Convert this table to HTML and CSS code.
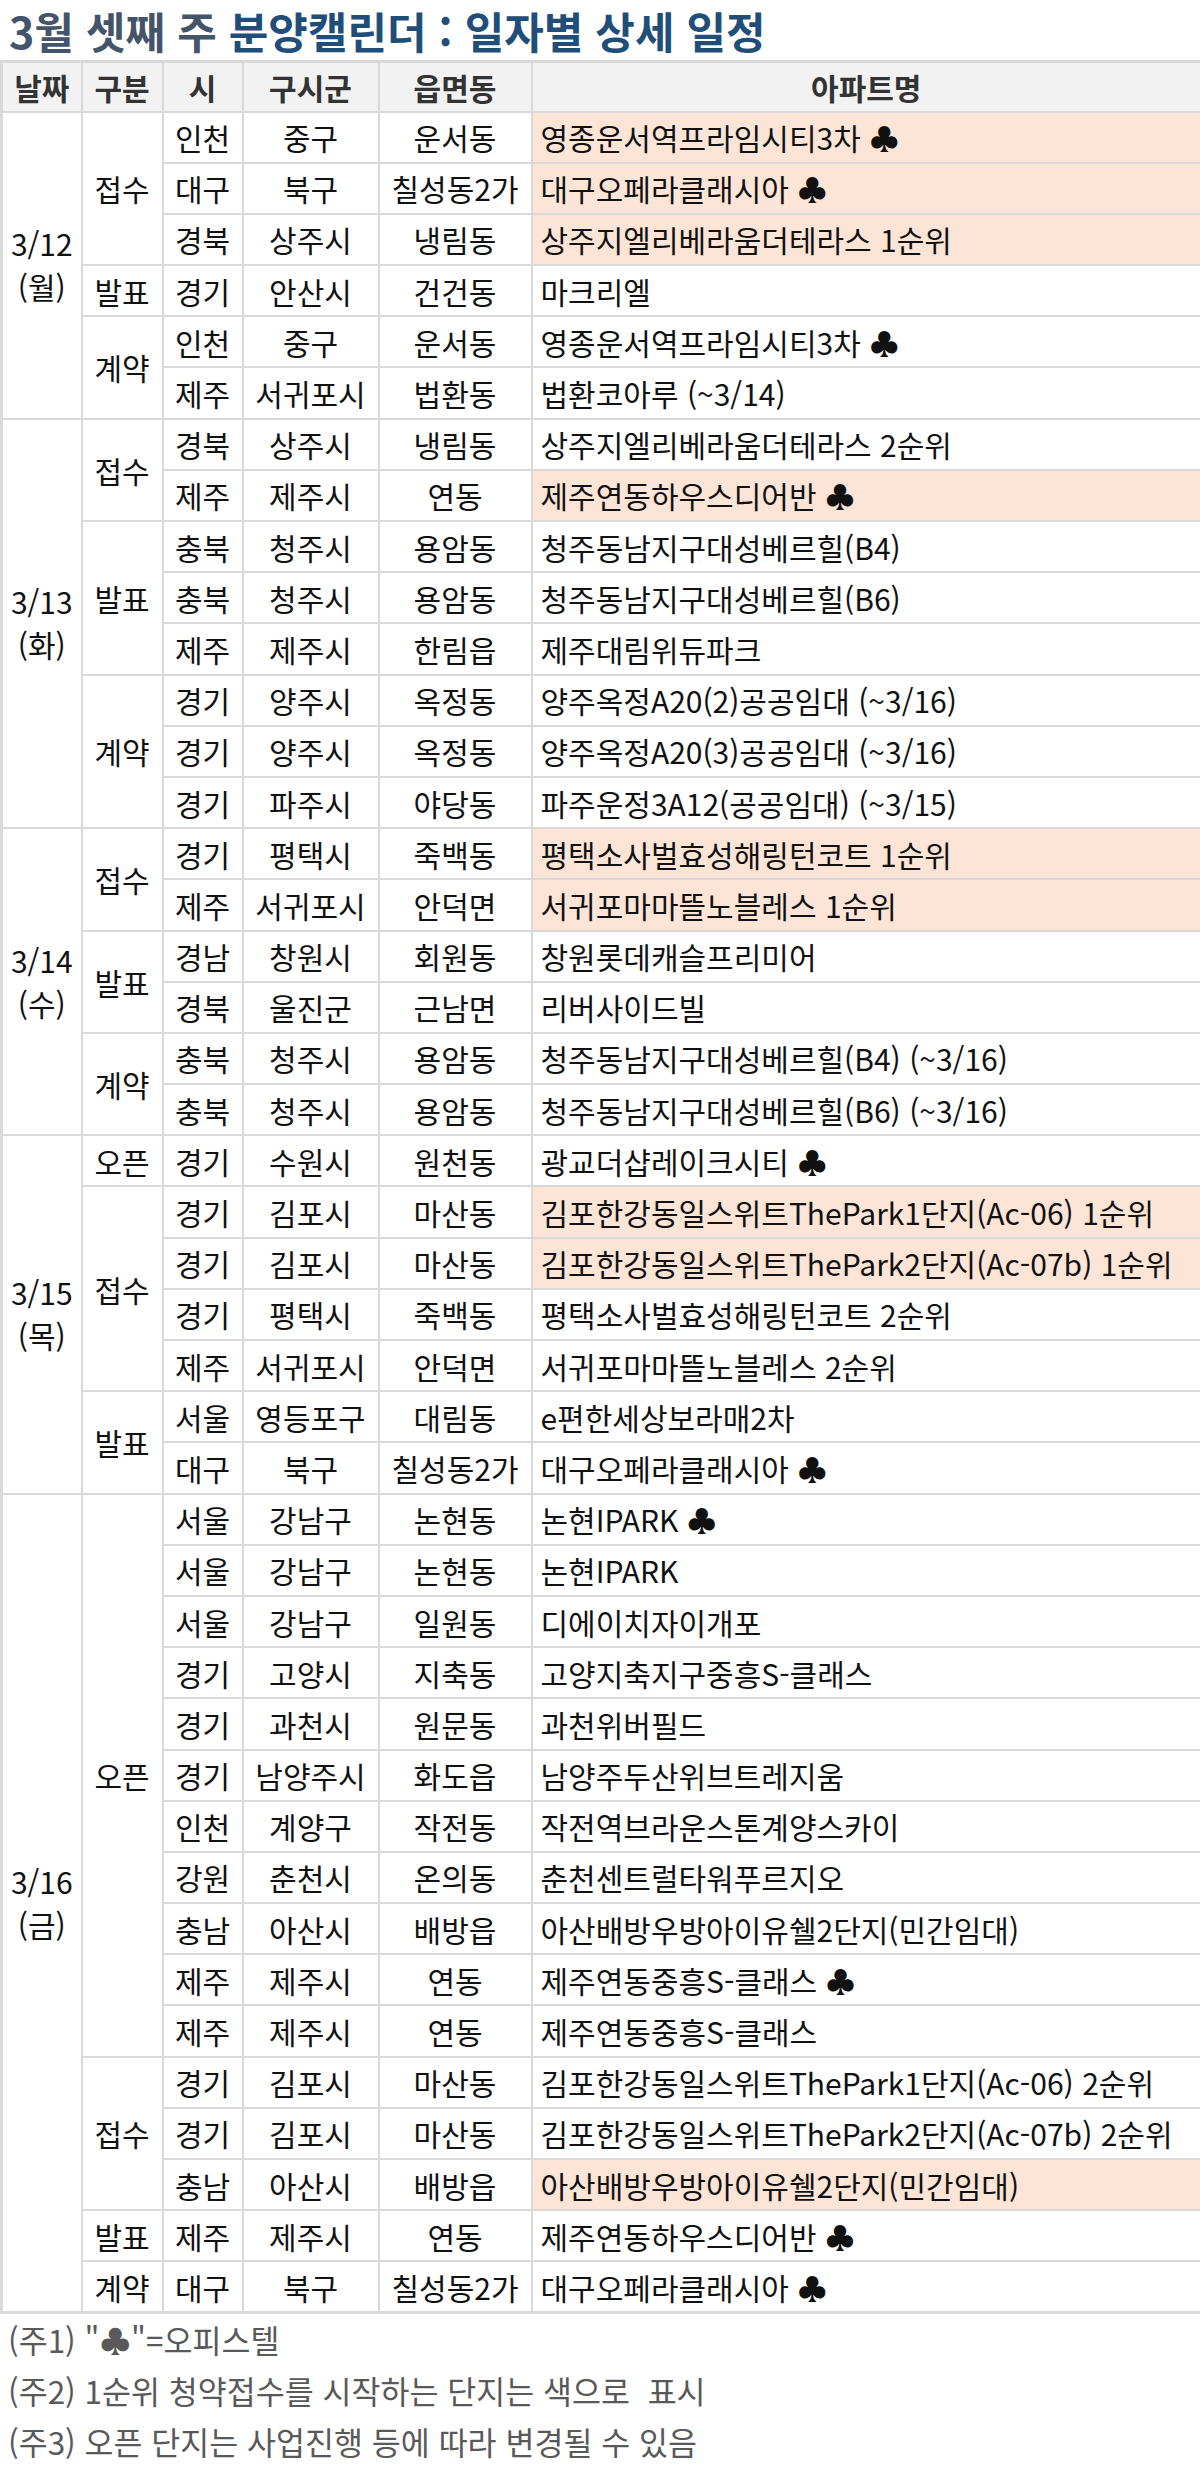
FILE: index.html
```html
<!DOCTYPE html>
<html lang="ko">
<head>
<meta charset="utf-8">
<title>3월 셋째 주 분양캘린더</title>
<link rel="stylesheet" href="styles.css">
</head>
<body>
<h1 class="title"><span class="title-week">3월 셋째 주</span> <span class="title-main">분양캘린더 : 일자별 상세 일정</span></h1>
<table class="cal">
<colgroup>
<col class="c-date"><col class="c-type"><col class="c-si"><col class="c-gu"><col class="c-dong"><col class="c-apt">
</colgroup>
<thead>
<tr><th>날짜</th><th>구분</th><th>시</th><th>구시군</th><th>읍면동</th><th>아파트명</th></tr>
</thead>
<tbody>
<tr><td rowspan="6" class="date">3/12<br>(월)</td><td rowspan="3">접수</td><td>인천</td><td>중구</td><td>운서동</td><td class="apt hl">영종운서역프라임시티3차 ♣</td></tr>
<tr><td>대구</td><td>북구</td><td>칠성동2가</td><td class="apt hl">대구오페라클래시아 ♣</td></tr>
<tr><td>경북</td><td>상주시</td><td>냉림동</td><td class="apt hl">상주지엘리베라움더테라스 1순위</td></tr>
<tr><td>발표</td><td>경기</td><td>안산시</td><td>건건동</td><td class="apt">마크리엘</td></tr>
<tr><td rowspan="2">계약</td><td>인천</td><td>중구</td><td>운서동</td><td class="apt">영종운서역프라임시티3차 ♣</td></tr>
<tr><td>제주</td><td>서귀포시</td><td>법환동</td><td class="apt">법환코아루 (~3/14)</td></tr>

<tr><td rowspan="8" class="date">3/13<br>(화)</td><td rowspan="2">접수</td><td>경북</td><td>상주시</td><td>냉림동</td><td class="apt">상주지엘리베라움더테라스 2순위</td></tr>
<tr><td>제주</td><td>제주시</td><td>연동</td><td class="apt hl">제주연동하우스디어반 ♣</td></tr>
<tr><td rowspan="3">발표</td><td>충북</td><td>청주시</td><td>용암동</td><td class="apt">청주동남지구대성베르힐(B4)</td></tr>
<tr><td>충북</td><td>청주시</td><td>용암동</td><td class="apt">청주동남지구대성베르힐(B6)</td></tr>
<tr><td>제주</td><td>제주시</td><td>한림읍</td><td class="apt">제주대림위듀파크</td></tr>
<tr><td rowspan="3">계약</td><td>경기</td><td>양주시</td><td>옥정동</td><td class="apt">양주옥정A20(2)공공임대 (~3/16)</td></tr>
<tr><td>경기</td><td>양주시</td><td>옥정동</td><td class="apt">양주옥정A20(3)공공임대 (~3/16)</td></tr>
<tr><td>경기</td><td>파주시</td><td>야당동</td><td class="apt">파주운정3A12(공공임대) (~3/15)</td></tr>

<tr><td rowspan="6" class="date">3/14<br>(수)</td><td rowspan="2">접수</td><td>경기</td><td>평택시</td><td>죽백동</td><td class="apt hl">평택소사벌효성해링턴코트 1순위</td></tr>
<tr><td>제주</td><td>서귀포시</td><td>안덕면</td><td class="apt hl">서귀포마마뜰노블레스 1순위</td></tr>
<tr><td rowspan="2">발표</td><td>경남</td><td>창원시</td><td>회원동</td><td class="apt">창원롯데캐슬프리미어</td></tr>
<tr><td>경북</td><td>울진군</td><td>근남면</td><td class="apt">리버사이드빌</td></tr>
<tr><td rowspan="2">계약</td><td>충북</td><td>청주시</td><td>용암동</td><td class="apt">청주동남지구대성베르힐(B4) (~3/16)</td></tr>
<tr><td>충북</td><td>청주시</td><td>용암동</td><td class="apt">청주동남지구대성베르힐(B6) (~3/16)</td></tr>

<tr><td rowspan="7" class="date">3/15<br>(목)</td><td>오픈</td><td>경기</td><td>수원시</td><td>원천동</td><td class="apt">광교더샵레이크시티 ♣</td></tr>
<tr><td rowspan="4">접수</td><td>경기</td><td>김포시</td><td>마산동</td><td class="apt hl">김포한강동일스위트ThePark1단지(Ac-06) 1순위</td></tr>
<tr><td>경기</td><td>김포시</td><td>마산동</td><td class="apt hl">김포한강동일스위트ThePark2단지(Ac-07b) 1순위</td></tr>
<tr><td>경기</td><td>평택시</td><td>죽백동</td><td class="apt">평택소사벌효성해링턴코트 2순위</td></tr>
<tr><td>제주</td><td>서귀포시</td><td>안덕면</td><td class="apt">서귀포마마뜰노블레스 2순위</td></tr>
<tr><td rowspan="2">발표</td><td>서울</td><td>영등포구</td><td>대림동</td><td class="apt">e편한세상보라매2차</td></tr>
<tr><td>대구</td><td>북구</td><td>칠성동2가</td><td class="apt">대구오페라클래시아 ♣</td></tr>

<tr><td rowspan="16" class="date">3/16<br>(금)</td><td rowspan="11">오픈</td><td>서울</td><td>강남구</td><td>논현동</td><td class="apt">논현IPARK ♣</td></tr>
<tr><td>서울</td><td>강남구</td><td>논현동</td><td class="apt">논현IPARK</td></tr>
<tr><td>서울</td><td>강남구</td><td>일원동</td><td class="apt">디에이치자이개포</td></tr>
<tr><td>경기</td><td>고양시</td><td>지축동</td><td class="apt">고양지축지구중흥S-클래스</td></tr>
<tr><td>경기</td><td>과천시</td><td>원문동</td><td class="apt">과천위버필드</td></tr>
<tr><td>경기</td><td>남양주시</td><td>화도읍</td><td class="apt">남양주두산위브트레지움</td></tr>
<tr><td>인천</td><td>계양구</td><td>작전동</td><td class="apt">작전역브라운스톤계양스카이</td></tr>
<tr><td>강원</td><td>춘천시</td><td>온의동</td><td class="apt">춘천센트럴타워푸르지오</td></tr>
<tr><td>충남</td><td>아산시</td><td>배방읍</td><td class="apt">아산배방우방아이유쉘2단지(민간임대)</td></tr>
<tr><td>제주</td><td>제주시</td><td>연동</td><td class="apt">제주연동중흥S-클래스 ♣</td></tr>
<tr><td>제주</td><td>제주시</td><td>연동</td><td class="apt">제주연동중흥S-클래스</td></tr>
<tr><td rowspan="3">접수</td><td>경기</td><td>김포시</td><td>마산동</td><td class="apt">김포한강동일스위트ThePark1단지(Ac-06) 2순위</td></tr>
<tr><td>경기</td><td>김포시</td><td>마산동</td><td class="apt">김포한강동일스위트ThePark2단지(Ac-07b) 2순위</td></tr>
<tr><td>충남</td><td>아산시</td><td>배방읍</td><td class="apt hl">아산배방우방아이유쉘2단지(민간임대)</td></tr>
<tr><td>발표</td><td>제주</td><td>제주시</td><td>연동</td><td class="apt">제주연동하우스디어반 ♣</td></tr>
<tr><td>계약</td><td>대구</td><td>북구</td><td>칠성동2가</td><td class="apt">대구오페라클래시아 ♣</td></tr>
</tbody>
</table>
<div class="notes">
<p class="note">(주1) "♣"=오피스텔</p>
<p class="note">(주2) 1순위 청약접수를 시작하는 단지는 색으로&nbsp; 표시</p>
<p class="note">(주3) 오픈 단지는 사업진행 등에 따라 변경될 수 있음</p>
</div>
</body>
</html>
```

FILE: styles.css
```css
html, body {
  margin: 0;
  padding: 0;
  background: #ffffff;
}
body {
  font-family: "Noto Sans CJK KR", "Noto Sans", sans-serif;
  color: #111111;
}
.title {
  margin: 0;
  padding: 0 0 0 9px;
  height: 60px;
  line-height: 60px;
  font-size: 43px;
  font-weight: 700;
  white-space: nowrap;
}
.title-week {
  color: #44546a;
}
.title-main {
  color: #1f4e79;
}
.cal {
  width: 1200px;
  border-collapse: collapse;
  table-layout: fixed;
  border: 3px solid #d9d9d9;
  font-size: 30px;
}
.c-date { width: 80px; }
.c-type { width: 81px; }
.c-si { width: 80px; }
.c-gu { width: 136px; }
.c-dong { width: 153px; }
.c-apt { width: 670px; }
.cal th,
.cal td {
  border: 2px solid #d9d9d9;
  padding: 0;
  text-align: center;
  vertical-align: middle;
  white-space: nowrap;
  line-height: 1.4;
}
.cal tr {
  height: 51.2px;
}
.cal thead tr {
  height: 50px;
}
.cal th {
  background: #f2f2f2;
  color: #333333;
  font-weight: 700;
}
.cal td.date {
  line-height: 43px;
}
.cal td.apt {
  text-align: left;
  padding-left: 8px;
}
.cal td.hl {
  background: #fce4d6;
}
.notes {
  padding-left: 8px;
}
.note {
  margin: 0;
  font-size: 31.5px;
  line-height: 51px;
  color: #595959;
  white-space: nowrap;
}
```
